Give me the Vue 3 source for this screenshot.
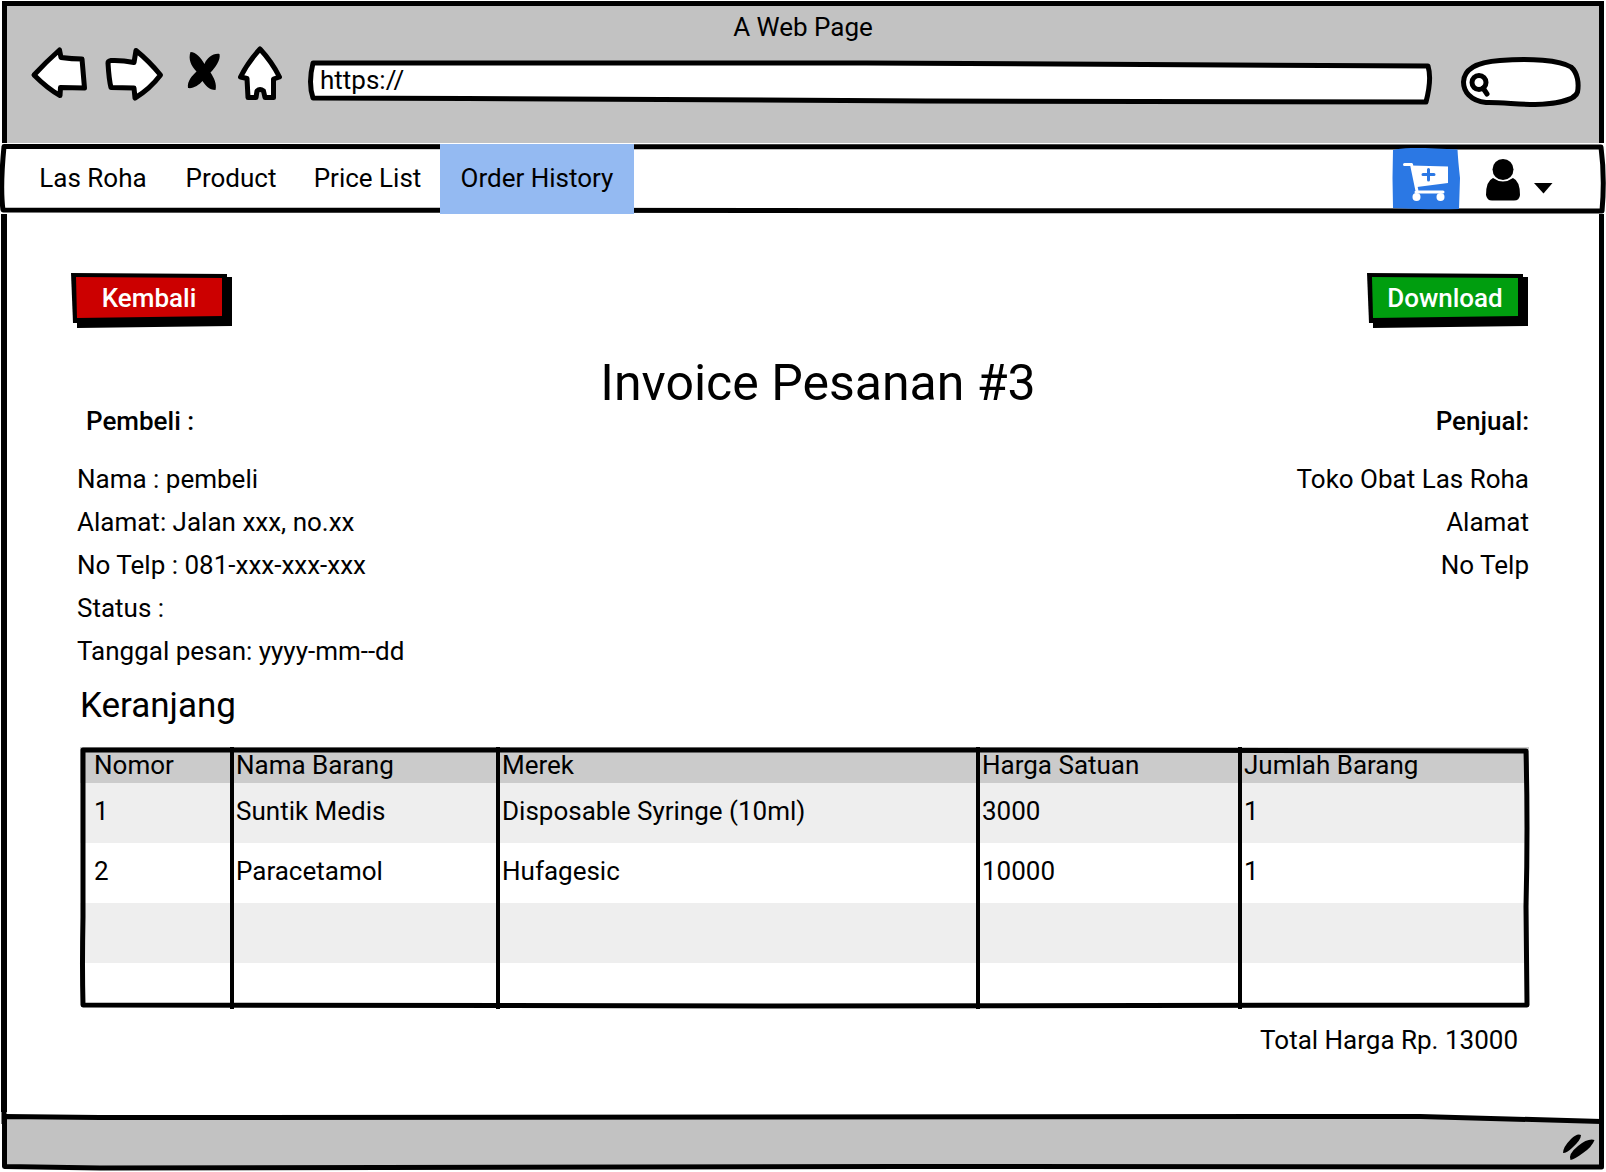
<script setup>
import { ref } from 'vue'

const address = ref('https://')
const query = ref('')

const links = ['Las Roha', 'Product', 'Price List', 'Order History']
const active = 'Order History'

const buyer = [
  'Nama : pembeli',
  'Alamat: Jalan xxx, no.xx',
  'No Telp : 081-xxx-xxx-xxx',
  'Status :',
  'Tanggal pesan: yyyy-mm--dd',
]
const seller = ['Toko Obat Las Roha', 'Alamat', 'No Telp']

const columns = ['Nomor', 'Nama Barang', 'Merek', 'Harga Satuan', 'Jumlah Barang']
const rows = [
  ['1', 'Suntik Medis', 'Disposable Syringe (10ml)', '3000', '1'],
  ['2', 'Paracetamol', 'Hufagesic', '10000', '1'],
  ['', '', '', '', ''],
  ['', '', '', '', ''],
]
</script>

<template>
  <div class="window">
    <header class="chrome">
      <div class="title">A Web Page</div>
      <div class="toolbar">
        <button class="tool" aria-label="Back">
          <svg width="60" height="58" viewBox="30 45 60 58">
            <path class="ink" d="M34 75 Q46 62 59.500 50 L61 57.500 Q72 59 82 59 L84.500 88 L60.500 87.500 L60 95.500 Q48 89 34 75Z" />
          </svg>
        </button>
        <button class="tool" aria-label="Forward">
          <svg width="64" height="58" viewBox="102 45 64 58">
            <path class="ink" d="M111 60.500 Q122 60 134 62.500 L136 50.500 Q149 61 160.500 75 Q150 89 135 98 L134 88 L111 87.500 Q109 80 108 63 Q108 61 111 60.500Z" />
          </svg>
        </button>
        <button class="tool" aria-label="Stop">
          <svg width="48" height="58" viewBox="178 45 48 58">
            <path d="M190.500 52 C196 52 201 58 204.500 64 C207 58 213 53 219.500 54 C221 60 215 68 210.500 72.500 C214 78 217 84 215.500 90 C209 90 205 85 202.500 81 C199 85 193 89 188 88 C187 81 192 76 196.500 71.500 C191 66 188 59 190.500 52Z" />
          </svg>
        </button>
        <button class="tool" aria-label="Home">
          <svg width="56" height="58" viewBox="238 45 56 58">
            <path class="ink" d="M260 49 Q272 62 279.500 77 L273.500 79 L273.500 97.500 L265 97.500 L263.500 91 Q260 88 257 91 L256 97.500 L248 97.500 L247 78.500 L240.500 77 Q248 62 260 49Z" />
          </svg>
        </button>
        <div class="address">
          <svg class="sketch" viewBox="0 0 1128 58" preserveAspectRatio="none" aria-hidden="true">
            <path class="ink" d="M7 18 L560 18 L1122 21 Q1126 34 1120 57 L620 56 L160 53.500 L7 53 Q2 38 7 18Z" />
          </svg>
          <input v-model="address" type="text" aria-label="Address" />
        </div>
        <div class="search">
          <svg width="140" height="64" viewBox="1446 45 140 64" aria-hidden="true">
            <path class="ink" d="M1486 102.500 C1470 101 1463.500 91 1463.500 82 C1464 69 1478 62 1500 60.500 C1530 58 1560 60 1571 67 C1578 73 1579 84 1577.500 92 C1575 101 1552 104 1535 104.500 C1518 104.500 1500 102 1486 102.500Z" />
            <circle class="lens" cx="1479" cy="82.500" r="7" />
            <path class="lens" d="M1483 88 L1487 94" />
          </svg>
          <input v-model="query" type="text" aria-label="Search" />
        </div>
      </div>
    </header>

    <nav class="nav">
      <svg class="sketch" viewBox="0 0 1606 70" preserveAspectRatio="none" aria-hidden="true">
        <path class="ink" d="M4 2.500 L1601 3 Q1605 34 1602 67 L3 66 Q0 44 4 2.500Z" />
      </svg>
      <div class="links">
        <a v-for="link in links" :key="link" href="#" :class="{ active: link === active }">{{ link }}</a>
      </div>
      <div class="account">
        <button class="tool" aria-label="Add to cart">
          <svg width="68" height="62" viewBox="1392 148 68 62">
            <path fill="#2b78e4" d="M1393 150 Q1402 147.500 1425 148 L1457.500 149.500 Q1458 160 1460 178 L1459 209 Q1430 210 1393 208 L1392.500 178Z" />
            <path fill="none" stroke="#fff" stroke-width="3" stroke-linecap="round" stroke-linejoin="round" d="M1404.500 164.500 L1411.500 164.500 L1417 191 M1416 192 L1443 192" />
            <path fill="#fff" d="M1411 165.500 L1448 166.500 L1448 183 L1417 187Z" />
            <circle cx="1416.500" cy="197" r="4" fill="#fff" />
            <circle cx="1440.500" cy="197" r="4" fill="#fff" />
            <path fill="none" stroke="#2b78e4" stroke-width="3" stroke-linecap="round" d="M1428.500 169.500 V180 M1423 174.500 H1434" />
          </svg>
        </button>
        <button class="tool" aria-label="Account">
          <svg width="68" height="44" viewBox="1486 157 68 44">
            <path d="M1493 178 Q1486 181 1486 195 Q1487 200.500 1492 200.500 L1514 200.500 Q1519.500 200.500 1520 195 Q1520 181 1513 178 Q1503 185 1493 178Z" />
            <circle cx="1503" cy="169.500" r="10.500" />
            <path d="M1534 183 L1552.500 183 L1543.500 193.500Z" />
          </svg>
        </button>
      </div>
    </nav>

    <main class="page">
      <div class="actions">
        <button class="btn back">
          <svg class="sketch" viewBox="0 0 162 56" preserveAspectRatio="none" aria-hidden="true">
            <path d="M6 5 H161 V54 L6 56Z" />
            <path d="M0 1 L156 2 V51 L2 51Z" />
            <path class="face" d="M5 5 L151 6 V44 L6 46Z" />
          </svg>
          <span>Kembali</span>
        </button>
        <button class="btn download">
          <svg class="sketch" viewBox="0 0 162 56" preserveAspectRatio="none" aria-hidden="true">
            <path d="M6 5 H161 V54 L6 56Z" />
            <path d="M0 1 L156 2 V51 L2 51Z" />
            <path class="face" d="M5 5 L151 6 V44 L6 46Z" />
          </svg>
          <span>Download</span>
        </button>
      </div>

      <h1>Invoice Pesanan #3</h1>

      <div class="parties">
        <section>
          <h2 class="buyer-title">Pembeli :</h2>
          <p v-for="line in buyer" :key="line">{{ line }}</p>
        </section>
        <section class="seller">
          <h2>Penjual:</h2>
          <p v-for="line in seller" :key="line">{{ line }}</p>
        </section>
      </div>

      <h3>Keranjang</h3>

      <div class="cart">
        <table>
          <colgroup>
            <col class="c-no" />
            <col class="c-name" />
            <col />
            <col class="c-price" />
            <col class="c-count" />
          </colgroup>
          <thead>
            <tr>
              <th v-for="c in columns" :key="c" scope="col">{{ c }}</th>
            </tr>
          </thead>
          <tbody>
            <tr v-for="(row, i) in rows" :key="i">
              <td v-for="(cell, j) in row" :key="j">{{ cell }}</td>
            </tr>
          </tbody>
        </table>
        <svg class="sketch" viewBox="0 0 1450 262" preserveAspectRatio="none" aria-hidden="true">
          <path class="ink hollow" d="M3 3 L900 3 L1447 4 Q1449 80 1447 160 L1448 258 L700 259 L3 258 Q2 220 3 170 Q3 60 3 3Z" />
        </svg>
      </div>

      <p class="total">Total Harga Rp. 13000</p>
    </main>

    <footer class="status">
      <svg class="sketch" viewBox="0 0 1606 60" preserveAspectRatio="none" aria-hidden="true">
        <path class="ink grey" d="M4.500 4.500 L100 5.500 L1420 4.500 L1601.500 9.500 L1601.500 55 L900 54.500 L100 56 L4.500 54.500Z" />
        <path class="ink" d="M4 0 V12 M1601.500 0 V12" />
      </svg>
      <svg class="grip" width="34" height="28" viewBox="1562 1132 34 28" aria-hidden="true">
        <path d="M1563 1153 Q1563 1147 1571 1139 Q1577 1133 1581 1135 Q1581 1140 1572 1148 Q1567 1153 1563 1153Z" />
        <path d="M1570.500 1160 Q1568 1154 1578 1146 Q1588 1138 1594.500 1140 Q1592 1147 1583 1153 Q1575 1159 1570.500 1160Z" />
      </svg>
    </footer>
  </div>
</template>

<style>
body {
  margin: 0;
  background: #fff;
}
</style>

<style scoped>
.window {
  display: flex;
  flex-direction: column;
  min-height: 100vh;
  box-sizing: border-box;
  padding-top: 1px;
  font-family: Roboto, "Noto Sans", sans-serif;
  font-size: 26px;
  line-height: 32px;
  color: #000;
}
h1, h2, h3, p {
  margin: 0;
  font-weight: 400;
}
button, input {
  font: inherit;
  color: inherit;
  background: none;
  border: 0;
  padding: 0;
  outline: 0;
}
button {
  cursor: pointer;
}
svg {
  display: block;
}
.sketch {
  position: absolute;
  inset: 0;
  width: 100%;
  height: 100%;
  overflow: visible;
  pointer-events: none;
}
.ink {
  fill: #fff;
  stroke: #000;
  stroke-width: 5px;
  stroke-linejoin: round;
  vector-effect: non-scaling-stroke;
}
.hollow {
  fill: none;
}
.grey {
  fill: #c2c2c2;
}

.chrome {
  margin: 0 2px 1px;
  padding: 5px 13px 34px 23px;
  border: 5px solid #000;
  border-bottom: 0;
  background: #c2c2c2;
}
.title {
  padding-right: 10px;
  text-align: center;
}
.toolbar {
  display: flex;
  align-items: flex-start;
  gap: 12px;
  margin-top: 2px;
}
.address {
  position: relative;
  flex: 1;
  height: 58px;
}
.address input {
  position: relative;
  display: block;
  box-sizing: border-box;
  width: 100%;
  height: 58px;
  padding: 12px 14px 0;
}
.search {
  position: relative;
}
.search input {
  position: absolute;
  inset: 20px 16px 12px 48px;
  width: 76px;
}
.lens {
  fill: none;
  stroke: #000;
  stroke-width: 5px;
  stroke-linecap: round;
}

.nav {
  position: relative;
  display: flex;
  justify-content: space-between;
  height: 70px;
}
.links {
  position: relative;
  display: grid;
  grid-template-columns: 148px 128px 145px 194px;
  margin-left: 19px;
}
.links a {
  padding: 18px 0 20px;
  text-align: center;
  color: inherit;
  text-decoration: none;
}
.links .active {
  background: #94baf2;
}
.account {
  position: relative;
  display: flex;
  align-items: center;
  gap: 26px;
  margin-right: 52px;
}

.page {
  flex: 1;
  margin: 0 2px 0 1px;
  padding: 58px 70px 50px 64px;
  border: solid #000;
  border-width: 0 5px 0 6px;
}
.actions {
  display: flex;
  justify-content: space-between;
}
.btn {
  position: relative;
  width: 162px;
  height: 56px;
  padding: 0 6px 4px 0;
  font-weight: 500;
  color: #fff;
}
.btn span {
  position: relative;
}
.back .face {
  fill: #cc0000;
}
.download .face {
  fill: #009e0f;
}
h1 {
  margin-top: 33px;
  padding-left: 36px;
  text-align: center;
  font-size: 50px;
  line-height: 44px;
}
.parties {
  display: flex;
  justify-content: space-between;
  padding-left: 6px;
}
.parties h2 {
  margin-bottom: 21px;
  font-size: 26px;
  font-weight: 500;
}
.parties p {
  line-height: 43px;
}
.buyer-title {
  padding-left: 9px;
}
.seller {
  text-align: right;
}
h3 {
  margin-top: 13px;
  padding-left: 9px;
  font-size: 35px;
  line-height: 40px;
}
.cart {
  position: relative;
  margin: 21px 0 0 9px;
}
table {
  width: 100%;
  table-layout: fixed;
  border-collapse: separate;
  border-spacing: 0;
}
.c-no {
  width: 150px;
}
.c-name {
  width: 266px;
}
.c-price {
  width: 262px;
}
.c-count {
  width: 291px;
}
th, td {
  box-sizing: border-box;
  text-align: left;
  font-weight: 400;
  vertical-align: top;
  border-left: 4px solid #000;
}
th {
  height: 36px;
  padding: 2px;
  background: #cbcbcb;
}
td {
  height: 60px;
  padding: 12px 2px 16px;
}
th:first-child, td:first-child {
  padding-left: 14px;
  border-left: 0;
}
tbody tr:nth-child(odd) td {
  background: #eee;
}
tbody tr:last-child td {
  height: 46px;
  padding: 0;
}
.total {
  margin-top: 15px;
  padding-right: 11px;
  text-align: right;
}

.status {
  position: relative;
  display: flex;
  justify-content: flex-end;
  padding: 20px 10px 12px;
}
.grip {
  position: relative;
}
</style>
